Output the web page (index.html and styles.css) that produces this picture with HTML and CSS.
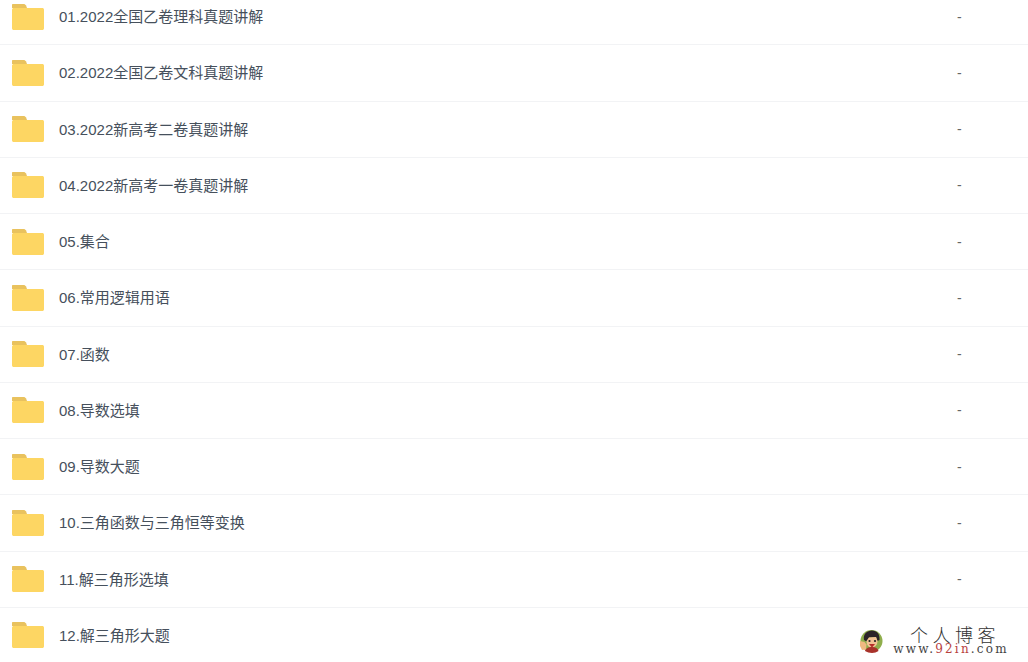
FILE: index.html
```html
<!DOCTYPE html>
<html lang="zh-CN">
<head>
    <meta charset="UTF-8">
    <title>文件列表</title>
    <link rel="stylesheet" href="styles.css">
</head>
<body>
    <svg class="icon-defs" width="0" height="0">
        <symbol id="folder" viewBox="0 0 32 26">
            <path d="M1 0h10.500c1.200 0 2 .6 2.600 1.600L15 4H0V1c0-.6.4-1 1-1z" fill="#e9c25e"/>
            <path d="M0 6c0-1.400.6-2 2-2h28c1.400 0 2 .6 2 2v18c0 1.400-.6 2-2 2H2c-1.400 0-2-.6-2-2z" fill="#fdd663"/>
        </symbol>
    </svg>

    <ul class="file-list">
        <li class="file-row"><svg class="folder-icon"><use href="#folder"/></svg><span class="file-name">01.2022全国乙卷理科真题讲解</span><span class="file-size">-</span></li>
        <li class="file-row"><svg class="folder-icon"><use href="#folder"/></svg><span class="file-name">02.2022全国乙卷文科真题讲解</span><span class="file-size">-</span></li>
        <li class="file-row"><svg class="folder-icon"><use href="#folder"/></svg><span class="file-name">03.2022新高考二卷真题讲解</span><span class="file-size">-</span></li>
        <li class="file-row"><svg class="folder-icon"><use href="#folder"/></svg><span class="file-name">04.2022新高考一卷真题讲解</span><span class="file-size">-</span></li>
        <li class="file-row"><svg class="folder-icon"><use href="#folder"/></svg><span class="file-name">05.集合</span><span class="file-size">-</span></li>
        <li class="file-row"><svg class="folder-icon"><use href="#folder"/></svg><span class="file-name">06.常用逻辑用语</span><span class="file-size">-</span></li>
        <li class="file-row"><svg class="folder-icon"><use href="#folder"/></svg><span class="file-name">07.函数</span><span class="file-size">-</span></li>
        <li class="file-row"><svg class="folder-icon"><use href="#folder"/></svg><span class="file-name">08.导数选填</span><span class="file-size">-</span></li>
        <li class="file-row"><svg class="folder-icon"><use href="#folder"/></svg><span class="file-name">09.导数大题</span><span class="file-size">-</span></li>
        <li class="file-row"><svg class="folder-icon"><use href="#folder"/></svg><span class="file-name">10.三角函数与三角恒等变换</span><span class="file-size">-</span></li>
        <li class="file-row"><svg class="folder-icon"><use href="#folder"/></svg><span class="file-name">11.解三角形选填</span><span class="file-size">-</span></li>
        <li class="file-row"><svg class="folder-icon"><use href="#folder"/></svg><span class="file-name">12.解三角形大题</span></li>
    </ul>

    <div class="watermark">
        <svg class="watermark-face" viewBox="0 0 24 24">
            <circle cx="12.500" cy="12" r="11" fill="#8fae4c"/>
            <path d="M5 11C4 5 8 1.500 13 1.500s8 3.500 7.500 9.500l-2 1-1.500-4-7 .5-2.500 4z" fill="#2c2428"/>
            <path d="M7.500 12l2.500-3.500 7-.5 1.500 4c0 4-2.500 6.500-6 6.500s-5-3-5-6.500z" fill="#f2c294"/>
            <circle cx="10.500" cy="12" r="1.100" fill="#222"/>
            <circle cx="16" cy="12" r="1.100" fill="#222"/>
            <path d="M10 15h6l-2.500 3h-1z" fill="#b52f28"/>
            <path d="M6 22c.5-2.500 3.500-4 7-4s6 1.500 6.500 4c-2 1.300-4 2-6.500 2s-5-.7-7-2z" fill="#a8322a"/>
            <path d="M1 12l4.500 1 2 2.500-.5 5-4 .5L1 17z" fill="#efb981"/>
        </svg>
        <div class="watermark-text">
            <div class="watermark-title">个人博客</div>
            <div class="watermark-url">www.<span class="watermark-red">92in</span>.com</div>
        </div>
    </div>
</body>
</html>
```

FILE: styles.css
```css
* {
    margin: 0;
    padding: 0;
    box-sizing: border-box;
}

html, body {
    height: 100%;
    overflow: hidden;
}

body {
    background: #fff;
    font-family: "Liberation Sans", "Noto Sans CJK SC", sans-serif;
    position: relative;
}

.icon-defs {
    position: absolute;
}

.file-list {
    list-style: none;
    margin-top: -11px;
}

.file-row {
    display: flex;
    align-items: center;
    height: 56.25px;
    padding-left: 12px;
    border-bottom: 1px solid #f2f3f5;
}

.folder-icon {
    width: 32px;
    height: 26px;
    flex-shrink: 0;
}

.file-name {
    margin-left: 15px;
    margin-bottom: 2px;
    width: 898px;
    font-size: 15px;
    color: #46505c;
}

.file-size {
    font-size: 14px;
    color: #666;
}

.watermark {
    position: absolute;
    left: 859px;
    top: 625px;
    display: flex;
    background: #fff;
    width: 169px;
    height: 37px;
}

.watermark-face {
    width: 24px;
    height: 24px;
    margin-top: 4px;
}

.watermark-text {
    margin-left: 9px;
    width: 118px;
    text-align: center;
}

.watermark-title {
    font-family: "Noto Sans CJK SC", sans-serif;
    font-size: 18px;
    line-height: 18px;
    letter-spacing: 4.500px;
    font-weight: 300;
    color: #333;
    margin-left: 8px;
}

.watermark-url {
    font-family: "DejaVu Serif", serif;
    font-size: 12px;
    line-height: 12px;
    letter-spacing: 2.200px;
    color: #444;
}

.watermark-red {
    color: #b8433f;
}
```
